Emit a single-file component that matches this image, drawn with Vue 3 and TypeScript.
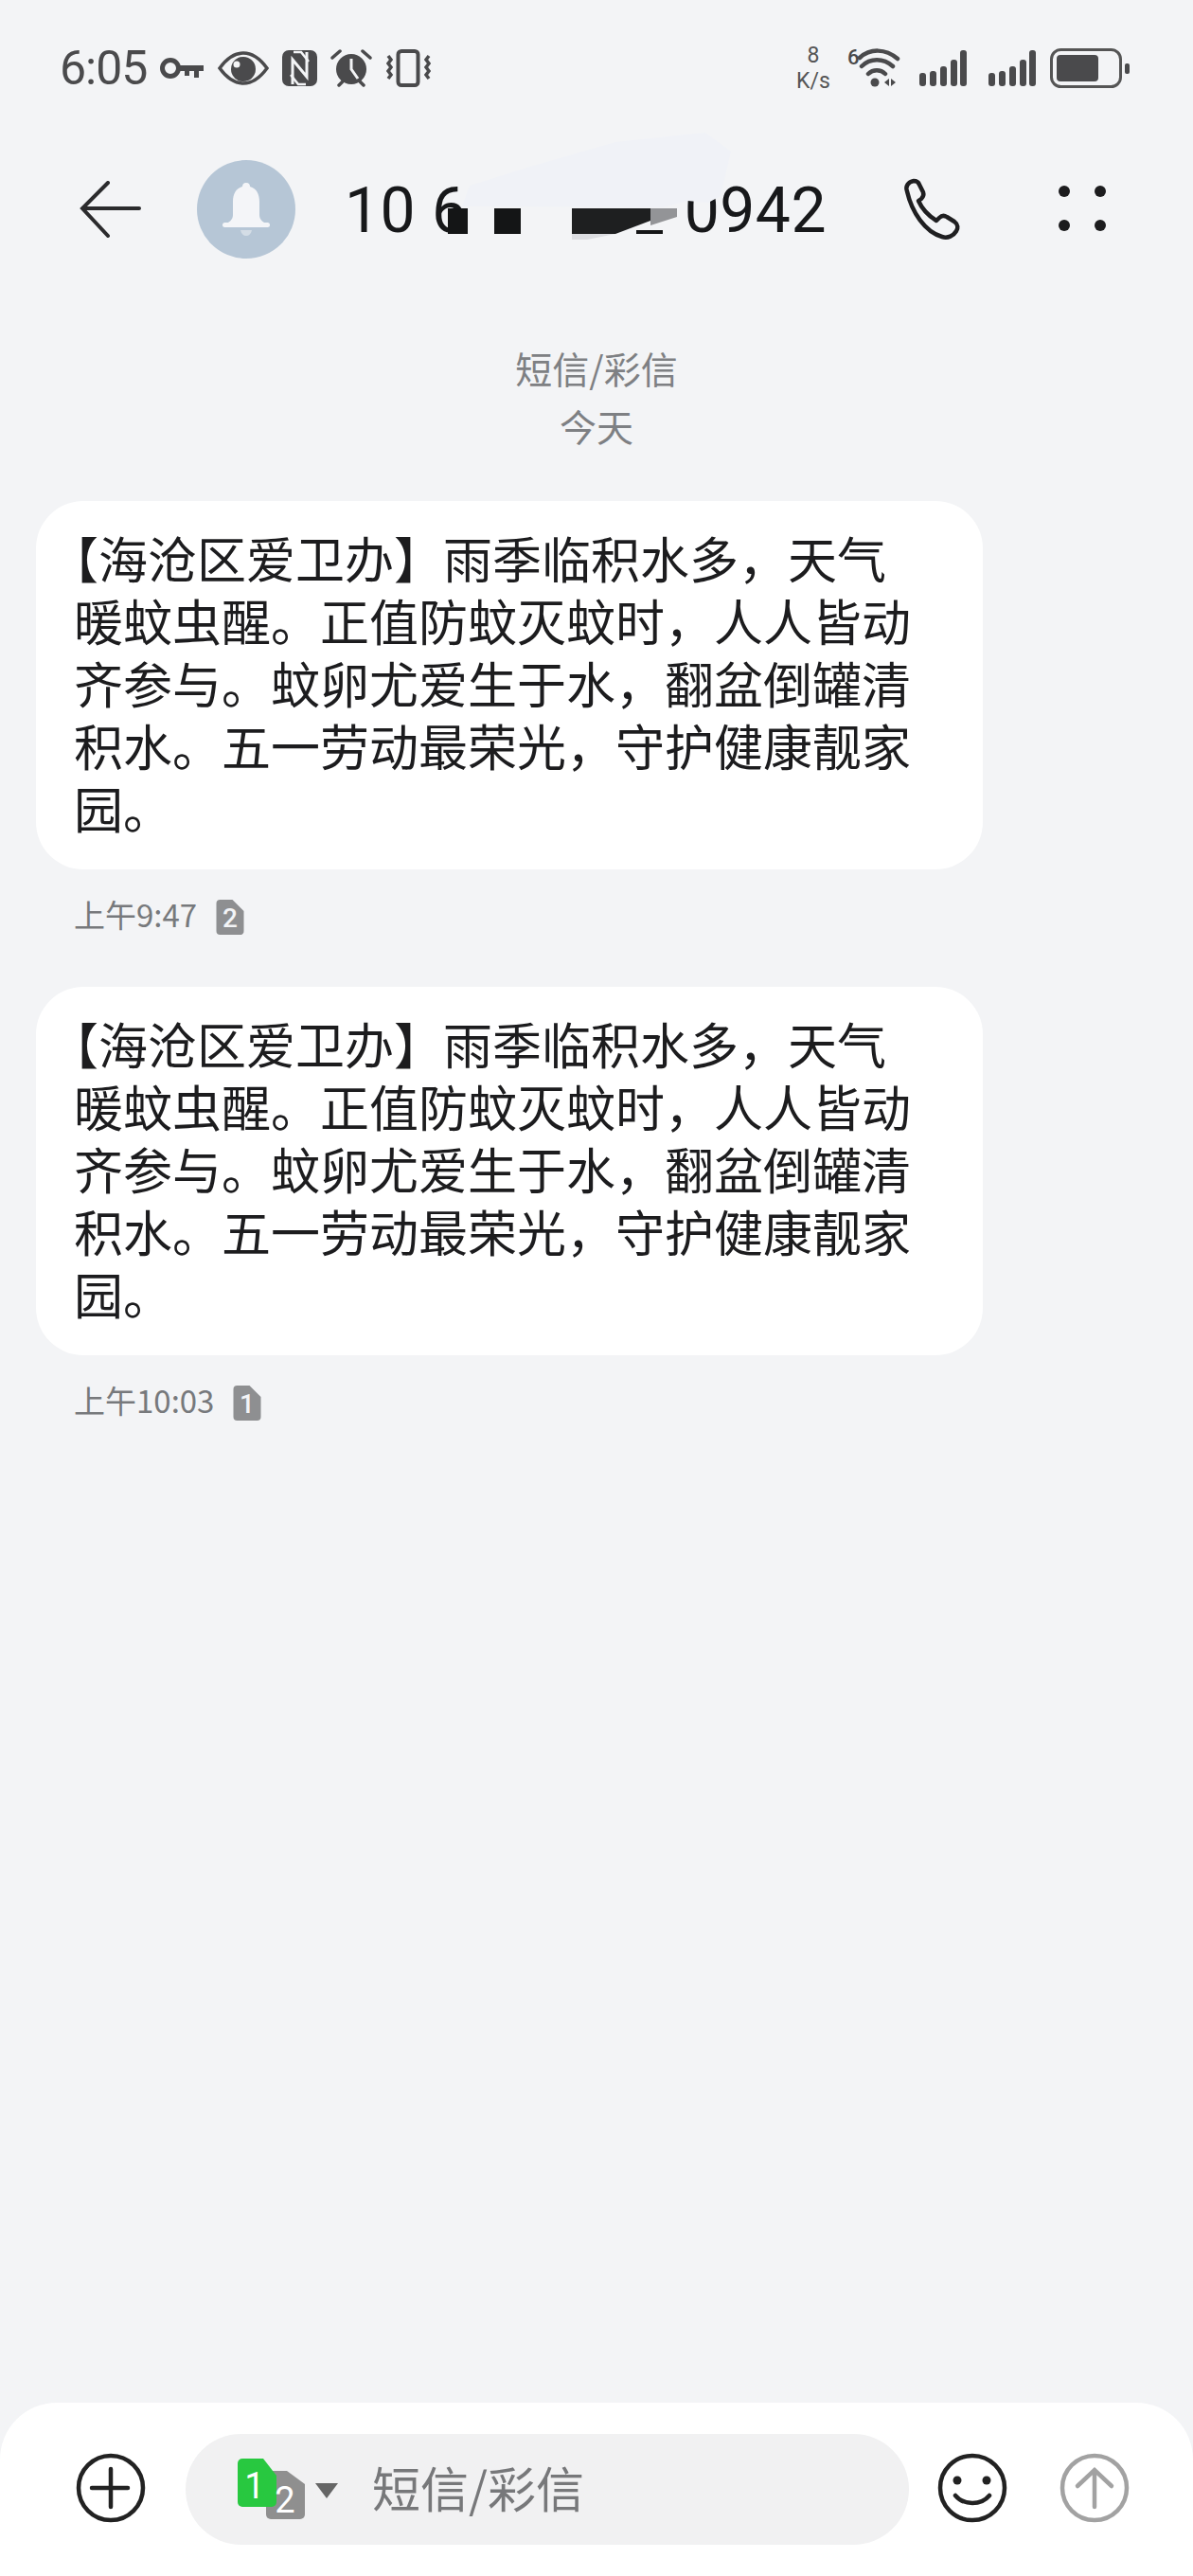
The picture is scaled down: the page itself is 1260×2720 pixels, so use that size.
<script setup lang="ts">
interface Message {
  id: number;
  text: string;
  time: string;
  sim: string;
}

const smsText =
  '【海沧区爱卫办】雨季临积水多，天气暖蚊虫醒。正值防蚊灭蚊时，人人皆动齐参与。蚊卵尤爱生于水，翻盆倒罐清积水。五一劳动最荣光，守护健康靓家园。';

const messages: Message[] = [
  { id: 1, text: smsText, time: '上午9:47', sim: '2' },
  { id: 2, text: smsText, time: '上午10:03', sim: '1' },
];

const signalBars = [
  { x: 0, y: 25, h: 14 },
  { x: 11, y: 23, h: 16 },
  { x: 22, y: 18, h: 21 },
  { x: 33, y: 11, h: 28 },
  { x: 43, y: 1, h: 38 },
];
</script>

<template>
  <div class="screen">
    <div class="status-bar">
      <span class="clock">6:05</span>
      <svg class="st key" width="48" height="26" viewBox="0 0 48 26">
        <circle cx="12" cy="13" r="8.5" fill="none" stroke="#4a4a4c" stroke-width="5" />
        <path d="M20 10h27v6h-5v7h-5v-7h-5v5h-5v-5h-7z" fill="#4a4a4c" />
      </svg>
      <svg class="st eye" width="54" height="36" viewBox="0 0 54 36">
        <path d="M2 18C10 7 18 2 27 2s17 5 25 16c-8 11-16 16-25 16S10 29 2 18z" fill="none" stroke="#4a4a4c" stroke-width="3.5" />
        <circle cx="27" cy="19" r="13" fill="#4a4a4c" />
        <circle cx="20" cy="14" r="3.5" fill="#f3f4f6" />
      </svg>
      <svg class="st nfc" width="37" height="38" viewBox="0 0 37 38">
        <rect width="37" height="38" rx="7" fill="#4a4a4c" />
        <path d="M11 36V10l15 18V2" fill="none" stroke="#f3f4f6" stroke-width="3" />
        <path d="M12 2h8l8 10M25 36h-8L9 26" fill="none" stroke="#f3f4f6" stroke-width="2.5" />
      </svg>
      <svg class="st alarm" width="44" height="40" viewBox="0 0 44 40">
        <circle cx="22" cy="21" r="16" fill="#4a4a4c" />
        <path d="M22 10v11l7 10" fill="none" stroke="#f3f4f6" stroke-width="3" />
        <path d="M2 9l8-7M42 9l-8-7M9 38l4-4M35 38l-4-4" stroke="#4a4a4c" stroke-width="3.5" stroke-linecap="round" />
      </svg>
      <svg class="st vib" width="49" height="40" viewBox="0 0 49 40">
        <rect x="13.5" y="2" width="21" height="36" rx="3.5" fill="none" stroke="#4a4a4c" stroke-width="4" />
        <path d="M3 7l3 4-3 4 3 4-3 4 3 4-3 4M46 7l-3 4 3 4-3 4 3 4-3 4 3 4" fill="none" stroke="#4a4a4c" stroke-width="3.5" />
      </svg>

      <div class="speed">
        <span>8</span>
        <span>K/s</span>
      </div>
      <svg class="wifi" width="56" height="54" viewBox="0 -6 56 54">
        <text x="0" y="17" class="wifi-six">6</text>
        <path d="M13 10C24 0 40 0 53 11M15 19C24 10 38 10 48 19M22 27c5-5 13-5 18 0" fill="none" stroke="#4a4a4c" stroke-width="4.5" stroke-linecap="round" />
        <circle cx="29" cy="36" r="4.5" fill="#4a4a4c" />
        <path d="M39 36l5-4v8zM46 32l5 4-5 4z" fill="#4a4a4c" />
      </svg>
      <svg class="signal" width="50" height="40" viewBox="0 0 50 40">
        <rect v-for="b in signalBars" :key="b.x" :x="b.x" :y="b.y" width="7" :height="b.h" rx="3" fill="#4a4a4c" />
      </svg>
      <svg class="signal second" width="50" height="40" viewBox="0 0 50 40">
        <rect v-for="b in signalBars" :key="b.x" :x="b.x" :y="b.y" width="7" :height="b.h" rx="3" fill="#4a4a4c" />
      </svg>
      <svg class="battery" width="85" height="42" viewBox="0 0 85 42">
        <rect x="1.5" y="1.5" width="73" height="39" rx="10" fill="none" stroke="#555" stroke-width="3" />
        <rect x="7" y="7" width="44" height="28" rx="4" fill="#4a4a4c" />
        <rect x="79" y="16" width="5" height="11" rx="2" fill="#4a4a4c" />
      </svg>
    </div>

    <header class="top-bar">
      <svg class="back" width="70" height="60" viewBox="0 0 70 60">
        <path d="M67 29H8M34 2L7 29l27 29" fill="none" stroke="#2b2b2d" stroke-width="4" stroke-linecap="round" />
      </svg>
      <div class="avatar">
        <svg width="52" height="60" viewBox="0 0 52 60">
          <path d="M26 2c3 0 4 2 4 4 7 2 10 8 10 16v14c0 5 4 8 9 10H3c5-2 9-5 9-10V22c0-8 3-14 10-16 0-2 1-4 4-4z" fill="#f4f5f8" />
          <rect x="1" y="44" width="50" height="5" rx="2.5" fill="#f4f5f8" />
          <path d="M20 52h12c-1 4-3 6-6 6s-5-2-6-6z" fill="#d4dde6" />
        </svg>
      </div>
      <h1 class="title">
        <span>10 6</span>
        <span class="title-gap" />
        <span>0942</span>
      </h1>
      <svg class="phone" width="66" height="66" viewBox="0 0 66 66">
        <path d="M5 14c-2-5 1-10 7-11 3 0 5 1 6 4l4 8c1 3 0 5-2 7l-3 2c4 9 11 16 19 21l3-3c2-2 5-3 8-1l8 5c4 3 4 7 2 10-3 5-9 8-15 6C24 57 10 36 5 14z" fill="none" stroke="#1f1f21" stroke-width="4.5" stroke-linejoin="round" />
      </svg>
      <div class="dots">
        <i /><i /><i /><i />
      </div>
      <!-- redaction smear over the sender number -->
      <svg class="redact" width="360" height="130" viewBox="440 130 360 130">
        <polygon points="488,218 496,196 560,176 650,150 745,140 772,160 761,207 748,214 726,212 700,219" fill="#f0f2f7" />
        <polygon points="473,220 494,220 494,247 473,247" fill="#141516" />
        <rect x="522" y="220" width="28" height="27" fill="#141516" />
        <polygon points="604,220 687,220 687,233 650,247 604,247" fill="#1e1f20" />
        <polygon points="687,220 715,220 715,229 687,238" fill="#939497" />
        <polygon points="672,243 700,243 700,247 672,247" fill="#141516" />
        <polygon points="604,247 650,247 620,253 604,253" fill="#dcdde1" />
      </svg>
    </header>

    <div class="date-block">
      <div>短信/彩信</div>
      <div>今天</div>
    </div>

    <main class="thread">
      <section v-for="m in messages" :key="m.id" class="msg">
        <div class="bubble">{{ m.text }}</div>
        <div class="meta">
          <span class="time">{{ m.time }}</span>
          <svg class="sim-badge" width="30" height="37" viewBox="0 0 29 37">
            <path d="M4 0h13l12 12v21a4 4 0 0 1-4 4H4a4 4 0 0 1-4-4V4a4 4 0 0 1 4-4z" fill="#8e8f91" />
            <text x="14.5" y="29" text-anchor="middle" class="sim-num">{{ m.sim }}</text>
          </svg>
        </div>
      </section>
    </main>

    <footer class="composer">
      <svg width="80" height="80" viewBox="0 0 80 80">
        <circle cx="40" cy="40" r="34" fill="none" stroke="#222" stroke-width="4.5" />
        <path d="M40 20v40M20 40h38" stroke="#222" stroke-width="4.5" stroke-linecap="round" />
      </svg>
      <div class="input-pill">
        <svg class="sim-pick" width="106" height="76" viewBox="0 0 106 76">
          <path d="M35 13h17l19 14v32a5 5 0 0 1-5 5H35a5 5 0 0 1-5-5V18a5 5 0 0 1 5-5z" fill="#8f8f8f" />
          <path d="M5 0h22l14 18v28a5 5 0 0 1-5 5H5a5 5 0 0 1-5-5V5a5 5 0 0 1 5-5z" fill="#28c840" />
          <text x="18" y="42" text-anchor="middle" class="pick-num">1</text>
          <text x="50" y="57" text-anchor="middle" class="pick-num">2</text>
          <path d="M82 26h24l-12 16z" fill="#666" />
        </svg>
        <span class="placeholder">短信/彩信</span>
      </div>
      <svg class="smile" width="80" height="80" viewBox="0 0 80 80">
        <circle cx="40" cy="40" r="34" fill="none" stroke="#222" stroke-width="4.5" />
        <circle cx="24" cy="32" r="4.5" fill="#222" />
        <circle cx="55" cy="32" r="4.5" fill="#222" />
        <path d="M22 48c5 6 11 8 18 8s13-2 18-8" fill="none" stroke="#222" stroke-width="4.5" stroke-linecap="round" />
      </svg>
      <svg class="send" width="80" height="80" viewBox="0 0 80 80">
        <circle cx="40" cy="40" r="34" fill="none" stroke="#a2a2a2" stroke-width="4.5" />
        <path d="M40 60V21M22 38l18-17 18 17" fill="none" stroke="#a2a2a2" stroke-width="4.5" stroke-linecap="round" />
      </svg>
    </footer>
  </div>
</template>

<style scoped>
.screen {
  width: 1260px;
  height: 2720px;
  display: flex;
  flex-direction: column;
  background: #f3f4f6;
  font-family: 'Noto Sans CJK SC', 'Noto Sans', sans-serif;
  overflow: hidden;
}

.status-bar {
  height: 44px;
  margin-top: 50px;
  padding-left: 63px;
  display: flex;
  align-items: center;
  color: #4a4a4c;
}

.clock {
  width: 97px;
  font-family: Roboto, sans-serif;
  font-size: 50px;
  line-height: 44px;
  letter-spacing: -1px;
  white-space: nowrap;
}

.st {
  flex: none;
  margin-left: 14px;
}

.key {
  margin-left: 8px;
}

.speed {
  margin-left: 381px;
  width: 44px;
  display: flex;
  flex-direction: column;
  align-items: center;
  font-family: Roboto, sans-serif;
  font-size: 23px;
  line-height: 27px;
  color: #555;
}

.wifi {
  margin-left: 14px;
}

.wifi-six {
  font-family: Roboto, sans-serif;
  font-size: 22px;
  font-weight: 500;
  fill: #4a4a4c;
}

.signal {
  margin-left: 20px;
}

.signal.second {
  margin-left: 23px;
}

.battery {
  margin-left: 15px;
}

.top-bar {
  position: relative;
  height: 104px;
  margin-top: 75px;
  padding-left: 80px;
  display: flex;
  align-items: center;
}

.avatar {
  width: 104px;
  height: 104px;
  margin-left: 58px;
  border-radius: 50%;
  background: #b6c6d6;
  display: flex;
  align-items: center;
  justify-content: center;
}

.title {
  margin: 3px 0 0 52px;
  display: flex;
  font-family: Roboto, sans-serif;
  font-size: 66px;
  font-weight: 400;
  line-height: 80px;
  color: #17181a;
  letter-spacing: 0.5px;
  white-space: pre;
}

.title-gap {
  width: 229px;
}

.phone {
  margin-left: auto;
  margin-right: 241px;
  flex: none;
}

.dots {
  position: absolute;
  left: 1118px;
  top: 27px;
  width: 50px;
  display: grid;
  grid-template-columns: 12px 12px;
  justify-content: space-between;
  row-gap: 24px;
}

.dots i {
  width: 12px;
  height: 12px;
  border-radius: 50%;
  background: #1c1c1e;
}

.redact {
  position: absolute;
  left: 440px;
  top: -39px;
}

.date-block {
  margin-top: 85px;
  text-align: center;
  font-size: 39px;
  line-height: 61px;
  color: #7e8083;
}

.thread {
  flex: 1;
  margin-top: 49px;
  padding-left: 38px;
}

.msg {
  margin-bottom: 52px;
}

.bubble {
  width: 1000px;
  box-sizing: border-box;
  padding: 27px 70px 32px 40px;
  border-radius: 50px;
  background: #fff;
  font-size: 52px;
  line-height: 66px;
  color: #1c1c1e;
  text-spacing-trim: trim-start;
}

.meta {
  height: 44px;
  margin-top: 28px;
  padding-left: 40px;
  display: flex;
  align-items: center;
  gap: 20px;
  font-size: 33px;
  color: #77797c;
}

.time {
  margin-bottom: 6px;
}

.sim-num {
  font-family: Roboto, sans-serif;
  font-size: 28px;
  font-weight: 500;
  fill: #f3f4f6;
}

.composer {
  height: 183px;
  box-sizing: border-box;
  padding: 33px 0 0 77px;
  display: flex;
  align-items: flex-start;
  background: #fff;
  border-radius: 60px 60px 0 0;
}

.composer > svg {
  flex: none;
  margin-top: 17px;
}

.input-pill {
  width: 764px;
  height: 117px;
  margin-left: 39px;
  padding-left: 55px;
  box-sizing: border-box;
  display: flex;
  align-items: center;
  border-radius: 59px;
  background: #f1f1f2;
}

.sim-pick {
  flex: none;
  margin-top: 11px;
}

.pick-num {
  font-family: Roboto, sans-serif;
  font-size: 38px;
  fill: #fff;
}

.placeholder {
  margin-left: 36px;
  margin-bottom: 6px;
  font-size: 51px;
  color: #77787a;
  white-space: nowrap;
}

.smile {
  margin-left: 27px;
}

.send {
  margin-left: 49px;
}
</style>

<style>
html,
body {
  margin: 0;
  background: #f3f4f6;
}
</style>
